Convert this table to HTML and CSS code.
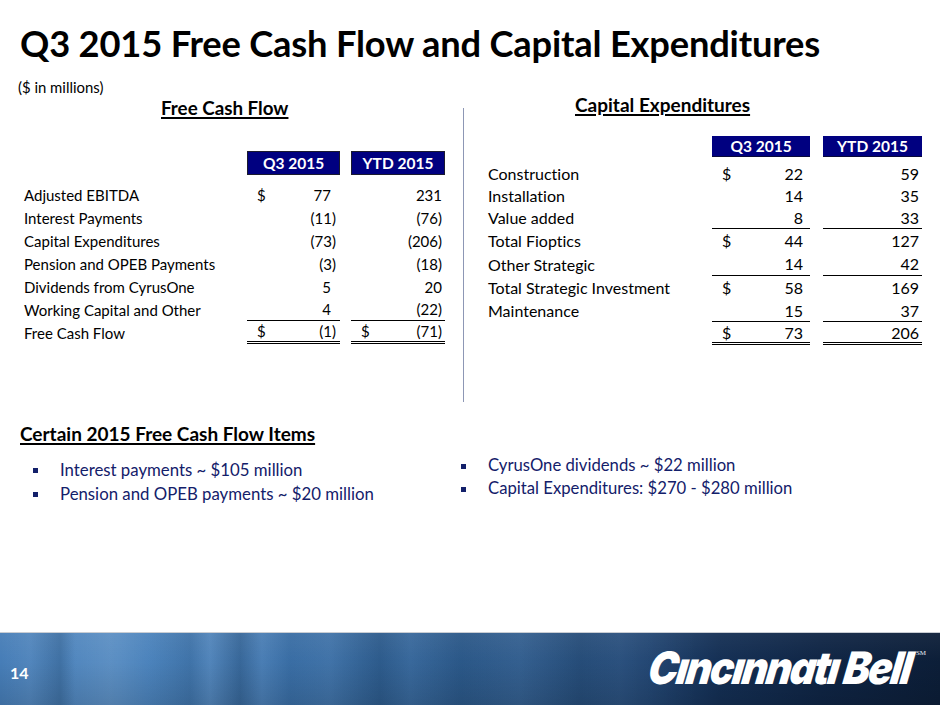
FILE: index.html
```html
<!DOCTYPE html>
<html lang="en">
<head>
<meta charset="utf-8">
<title>Q3 2015 Free Cash Flow and Capital Expenditures</title>
<link rel="stylesheet" href="styles.css">
</head>
<body>
<div class="slide">
  <main class="content">
    <h1 class="title">Q3 2015 Free Cash Flow and Capital Expenditures</h1>
    <div class="note">($ in millions)</div>

    <section class="tables">
      <div class="panel panel-left">
        <h2 class="heading heading-fcf">Free Cash Flow</h2>
        <div class="fin fcf">
          <div class="lbl"></div><div class="hdr">Q3 2015</div><div class="hdr">YTD 2015</div>

          <div class="lbl">Adjusted EBITDA</div>
          <div class="amt q"><span class="cur">$</span><span class="v pos">77</span></div>
          <div class="amt y"><span class="v">231</span></div>

          <div class="lbl">Interest Payments</div>
          <div class="amt q"><span class="v">(11)</span></div>
          <div class="amt y"><span class="v">(76)</span></div>

          <div class="lbl">Capital Expenditures</div>
          <div class="amt q"><span class="v">(73)</span></div>
          <div class="amt y"><span class="v">(206)</span></div>

          <div class="lbl">Pension and OPEB Payments</div>
          <div class="amt q"><span class="v">(3)</span></div>
          <div class="amt y"><span class="v">(18)</span></div>

          <div class="lbl">Dividends from CyrusOne</div>
          <div class="amt q"><span class="v pos">5</span></div>
          <div class="amt y"><span class="v">20</span></div>

          <div class="lbl">Working Capital and Other</div>
          <div class="amt q ul"><span class="v pos">4</span></div>
          <div class="amt y ul"><span class="v">(22)</span></div>

          <div class="lbl">Free Cash Flow</div>
          <div class="amt q dbl"><span class="cur">$</span><span class="v">(1)</span></div>
          <div class="amt y dbl"><span class="cur">$</span><span class="v">(71)</span></div>
        </div>
      </div>

      <div class="divider"></div>

      <div class="panel panel-right">
        <h2 class="heading heading-capex">Capital Expenditures</h2>
        <div class="fin capex">
          <div class="lbl"></div><div class="hdr">Q3 2015</div><div class="hdr">YTD 2015</div>

          <div class="lbl">Construction</div>
          <div class="amt q"><span class="cur">$</span><span class="v">22</span></div>
          <div class="amt y"><span class="v">59</span></div>

          <div class="lbl">Installation</div>
          <div class="amt q"><span class="v">14</span></div>
          <div class="amt y"><span class="v">35</span></div>

          <div class="lbl">Value added</div>
          <div class="amt q ul"><span class="v">8</span></div>
          <div class="amt y ul"><span class="v">33</span></div>

          <div class="lbl">Total Fioptics</div>
          <div class="amt q"><span class="cur">$</span><span class="v">44</span></div>
          <div class="amt y"><span class="v">127</span></div>

          <div class="lbl">Other Strategic</div>
          <div class="amt q ul"><span class="v">14</span></div>
          <div class="amt y ul"><span class="v">42</span></div>

          <div class="lbl">Total Strategic Investment</div>
          <div class="amt q"><span class="cur">$</span><span class="v">58</span></div>
          <div class="amt y"><span class="v">169</span></div>

          <div class="lbl">Maintenance</div>
          <div class="amt q ul"><span class="v">15</span></div>
          <div class="amt y ul"><span class="v">37</span></div>

          <div class="lbl"></div>
          <div class="amt q dbl"><span class="cur">$</span><span class="v">73</span></div>
          <div class="amt y dbl"><span class="v">206</span></div>
        </div>
      </div>
    </section>

    <section class="items">
      <div class="items-left">
        <h2 class="heading heading-items">Certain 2015 Free Cash Flow Items</h2>
        <ul class="bullets bullets-left">
          <li>Interest payments ~ $105 million</li>
          <li>Pension and OPEB payments ~ $20 million</li>
        </ul>
      </div>
      <div class="items-right">
        <ul class="bullets bullets-right">
          <li>CyrusOne dividends ~ $22 million</li>
          <li>Capital Expenditures: $270 - $280 million</li>
        </ul>
      </div>
    </section>
  </main>

  <footer class="footer">
    <span class="page-num">14</span>
    <div class="logo"><span class="logo-text">Cıncınnatı Bell</span><span class="sm">SM</span></div>
  </footer>
</div>
</body>
</html>
```

FILE: styles.css
```css
* { box-sizing: border-box; }

html, body {
  margin: 0;
  padding: 0;
  background: #ffffff;
}

body {
  font-family: Lato, "Open Sans", "Liberation Sans", sans-serif;
  font-variant-ligatures: none;
  color: #000;
}

.slide {
  width: 940px;
  height: 705px;
  display: flex;
  flex-direction: column;
  overflow: hidden;
}

.content {
  flex: 1;
  display: flex;
  flex-direction: column;
}

.title {
  margin: 0;
  padding: 21px 0 0 20px;
  font-size: 36.3px;
  line-height: 44px;
  font-weight: 700;
  letter-spacing: -0.2px;
}

.note {
  margin-top: 13px;
  padding-left: 18px;
  font-size: 14.9px;
  line-height: 18px;
}

.tables {
  display: flex;
  height: 306px;
}

.panel-left { width: 463px; }

.divider {
  width: 1px;
  height: 294px;
  margin-top: 12px;
  background: #8d97b5;
}

.panel-right { flex: 1; }

.heading {
  margin: 0;
  font-size: 19px;
  line-height: 22px;
  font-weight: 700;
  text-decoration: underline;
  text-decoration-thickness: 1.5px;
  text-underline-offset: 2px;
}

.heading-fcf {
  margin-top: 1px;
  padding-left: 161px;
  font-size: 18.8px;
}

.heading-capex {
  margin-top: -2px;
  padding-left: 111px;
}

.fin {
  display: grid;
  font-size: 15px;
}

.fcf {
  margin: 32px 0 0 24px;
  grid-template-columns: 212px 93px 94px;
  grid-template-rows: 32px repeat(7, 23px);
  column-gap: 11px;
}

.fcf .hdr { margin-bottom: 8px; }

.capex {
  margin: 20px 0 0 24px;
  grid-template-columns: 211px 98px 99px;
  grid-template-rows: 26px 22px 22px 23px 23px 24px 23px 23px 23px;
  column-gap: 13px;
  font-size: 16px;
}

.capex .hdr {
  margin-bottom: 5px;
  border: none;
  border-bottom: 1px solid #0a0a3a;
}

.hdr {
  background: #000080;
  color: #ffffff;
  font-weight: 700;
  font-size: 15.5px;
  display: flex;
  align-items: center;
  justify-content: center;
  border: 1px solid #1b1b2e;
}

.lbl {
  display: flex;
  align-items: center;
  white-space: nowrap;
}

.amt {
  display: flex;
  align-items: center;
  justify-content: space-between;
  padding-left: 10px;
}

.amt .v { margin-left: auto; }

.fcf .q { padding-right: 4px; }
.fcf .y { padding-right: 3px; }
.fcf .pos { padding-right: 5px; }

.capex .q { padding-right: 7px; }
.capex .y { padding-right: 3px; }

.ul { border-bottom: 1.5px solid #000; }
.dbl { border-bottom: 3px double #000; }

.items {
  display: flex;
  margin-top: 21px;
}

.items-left { width: 440px; }

.items-right { padding-top: 31px; }

.heading-items {
  padding-left: 20px;
  font-size: 19px;
}

.bullets {
  list-style: none;
  margin: 0;
  padding: 0;
  color: #13206a;
  font-size: 16.8px;
  line-height: 24px;
}

.bullets-left {
  margin-top: 13px;
  padding-left: 60px;
}

.bullets-right {
  padding-left: 48px;
  line-height: 23px;
  font-size: 16.7px;
}

.bullets li {
  position: relative;
  white-space: nowrap;
}

.bullets li::before {
  content: "";
  position: absolute;
  left: -27px;
  top: 10px;
  width: 5px;
  height: 5px;
  background: #13206a;
}

.footer {
  height: 73px;
  flex: none;
  border-top: 1px solid #c9cdd3;
  display: flex;
  align-items: center;
  justify-content: space-between;
  padding: 0 14px 2px 10px;
  background:
    linear-gradient(180deg, rgba(255,255,255,0.05) 0%, rgba(0,0,0,0) 40%, rgba(0,0,0,0.12) 100%),
    linear-gradient(90deg,
      rgba(0,0,0,0) 0px, rgba(255,255,255,0.06) 30px, rgba(0,0,0,0.12) 60px, rgba(255,255,255,0.05) 75px,
      rgba(255,255,255,0.10) 110px, rgba(255,255,255,0.02) 150px, rgba(0,0,0,0.08) 190px, rgba(255,255,255,0.08) 210px,
      rgba(0,0,0,0.14) 240px, rgba(255,255,255,0.06) 262px, rgba(0,0,0,0.04) 290px, rgba(255,255,255,0.05) 330px,
      rgba(0,0,0,0.10) 380px, rgba(255,255,255,0.04) 410px, rgba(0,0,0,0.06) 460px, rgba(255,255,255,0.04) 520px,
      rgba(0,0,0,0.10) 580px, rgba(255,255,255,0.03) 620px, rgba(0,0,0,0) 700px),
    linear-gradient(90deg, #467db7 0px, #4a83bd 120px, #3f76b0 260px, #33679e 360px, #2d5c8f 470px, #2a5586 580px, #1f4370 650px, #142f54 720px, #0f2545 820px, #0c1e38 940px);
}

.page-num {
  color: #ffffff;
  font-weight: 700;
  font-size: 16px;
  margin-top: 8px;
}

.logo {
  display: flex;
  align-items: flex-start;
  color: #ffffff;
}

.logo-text {
  font-family: Inter, "Liberation Sans", sans-serif;
  font-weight: 900;
  font-style: italic;
  font-size: 40px;
  line-height: 40px;
  letter-spacing: -2px;
  transform: skewX(-8deg) scaleY(1.12);
}

.sm {
  font-family: "Liberation Serif", serif;
  font-size: 7px;
  margin-left: 5px;
  margin-top: 1px;
  color: #e8ecf2;
}
```
